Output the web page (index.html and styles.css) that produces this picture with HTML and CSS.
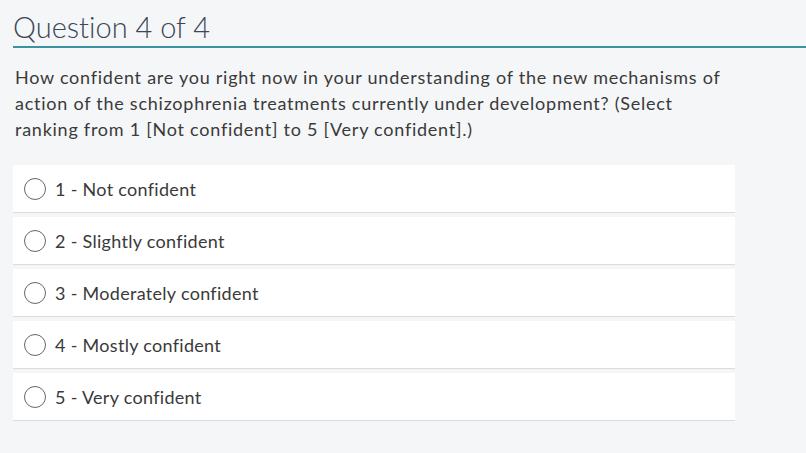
FILE: index.html
```html
<!DOCTYPE html>
<html>
<head>
<meta charset="utf-8">
<link rel="stylesheet" href="styles.css">
</head>
<body>
<div class="page">
  <h1 class="title">Question 4 of 4</h1>
  <p class="question">How confident are you right now in your understanding of the new mechanisms of action of the schizophrenia treatments currently under development? (Select ranking from 1 [Not confident] to 5 [Very confident].)</p>
  <div class="options">
    <label class="option"><span class="radio"></span><span class="label">1 - Not confident</span></label>
    <label class="option"><span class="radio"></span><span class="label">2 - Slightly confident</span></label>
    <label class="option"><span class="radio"></span><span class="label">3 - Moderately confident</span></label>
    <label class="option"><span class="radio"></span><span class="label">4 - Mostly confident</span></label>
    <label class="option"><span class="radio"></span><span class="label">5 - Very confident</span></label>
  </div>
</div>
</body>
</html>
```
FILE: styles.css
```css
html, body {
  margin: 0;
  padding: 0;
  background: #f5f6f8;
}
body {
  font-family: "Lato", "Open Sans", sans-serif;
  color: #333;
  font-variant-ligatures: none;
}
.page {
  padding: 9px 0 0 13px;
}
.title {
  margin: 0;
  font-family: "Lato", sans-serif;
  font-weight: 300;
  font-size: 29px;
  line-height: 36px;
  color: #3b4656;
  padding-bottom: 1px;
  border-bottom: 2px solid #3a92a2;
}
.question {
  margin: 16px 0 0 2px;
  width: 720px;
  font-size: 18px;
  letter-spacing: 0.75px;
  line-height: 26px;
  color: #3a3a3a;
}
.options {
  margin-top: 23px;
  width: 722px;
  display: flex;
  flex-direction: column;
  gap: 4px;
}
.option {
  height: 47px;
  background: #fff;
  border-bottom: 1px solid #dcdcdc;
  display: flex;
  align-items: center;
  padding-left: 11px;
}
.radio {
  width: 20px;
  height: 20px;
  border: 1.4px solid #666;
  border-radius: 50%;
  flex: none;
  margin-top: 1px;
}
.label {
  margin-left: 9px;
  font-size: 18px;
  letter-spacing: 0.3px;
  color: #3a3a3a;
}
```
